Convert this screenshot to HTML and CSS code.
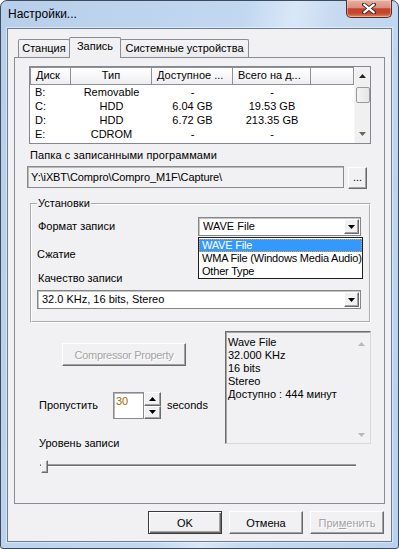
FILE: index.html
```html
<!DOCTYPE html>
<html lang="ru">
<head>
<meta charset="utf-8">
<title>Настройки</title>
<link rel="stylesheet" href="styles.css">
</head>
<body>
<div class="window">
  <div class="titlebar">
    <span class="title">Настройки...</span>
    <div class="close">
      <svg width="14" height="11" viewBox="0 0 14 11"><path d="M2 1.5 L12 9.5 M12 1.5 L2 9.5" stroke="#3a2a28" stroke-width="4" stroke-linecap="round"/><path d="M2.2 1.7 L11.8 9.3 M11.8 1.7 L2.2 9.3" stroke="#fff" stroke-width="2.2" stroke-linecap="round"/></svg>
    </div>
  </div>
  <div class="client">
    <div class="tabs">
      <div class="tab t1">Станция</div>
      <div class="tab t2 active">Запись</div>
      <div class="tab t3">Системные устройства</div>
    </div>
    <div class="panel">
      <div class="lv">
        <div class="lv-main">
          <div class="lv-head">
            <div class="hc left">Диск</div>
            <div class="hc">Тип</div>
            <div class="hc left">Доступное ...</div>
            <div class="hc left">Всего на д...</div>
            <div class="hc"></div>
          </div>
          <div class="lv-row"><span class="rc left">B:</span><span class="rc">Removable</span><span class="rc">-</span><span class="rc">-</span></div>
          <div class="lv-row"><span class="rc left">C:</span><span class="rc">HDD</span><span class="rc">6.04 GB</span><span class="rc">19.53 GB</span></div>
          <div class="lv-row"><span class="rc left">D:</span><span class="rc">HDD</span><span class="rc">6.72 GB</span><span class="rc">213.35 GB</span></div>
          <div class="lv-row"><span class="rc left">E:</span><span class="rc">CDROM</span><span class="rc">-</span><span class="rc">-</span></div>
        </div>
        <div class="sb">
          <div class="sb-arrow"><svg width="7" height="4" viewBox="0 0 7 4"><path d="M0 4 L3.5 0 L7 4 Z" fill="#222"/></svg></div>
          <div class="sb-thumb"></div>
          <div class="sb-space"></div>
          <div class="sb-arrow"><svg width="7" height="4" viewBox="0 0 7 4"><path d="M0 0 L3.5 4 L7 0 Z" fill="#666"/></svg></div>
        </div>
      </div>

      <div class="lbl path-label">Папка с записанными программами</div>
      <div class="path-row">
        <div class="edit path">Y:\iXBT\Compro\Compro_M1F\Capture\</div>
        <div class="btn dots">...</div>
      </div>

      <fieldset class="group">
        <legend>Установки</legend>
        <div class="fmt-row">
          <div class="lbl fmt-label">Формат записи</div>
          <div class="combo-wrap">
            <div class="combo fmt-combo">
              <div class="combo-text">WAVE File</div>
              <div class="combo-btn"><svg width="7" height="4" viewBox="0 0 7 4"><path d="M0 0 L3.5 4 L7 0 Z" fill="#000"/></svg></div>
            </div>
            <div class="dropdown">
              <div class="dd-item sel">WAVE File</div>
              <div class="dd-item">WMA File (Windows Media Audio)</div>
              <div class="dd-item">Other Type</div>
            </div>
          </div>
        </div>
        <div class="lbl comp-label">Сжатие</div>
        <div class="lbl q-label">Качество записи</div>
        <div class="combo q-combo">
          <div class="combo-text">32.0 KHz, 16 bits, Stereo</div>
          <div class="combo-btn"><svg width="7" height="4" viewBox="0 0 7 4"><path d="M0 0 L3.5 4 L7 0 Z" fill="#000"/></svg></div>
        </div>
      </fieldset>

      <div class="lower">
        <div class="lower-left">
          <div class="btn disabled comp-btn">Compressor Property</div>
          <div class="skip-row">
            <span class="lbl skip-label">Пропустить</span>
            <div class="spin">
              <div class="spin-edit">30</div>
              <div class="spin-btns">
                <div class="spin-b"><svg width="7" height="4" viewBox="0 0 7 4"><path d="M0 4 L3.5 0 L7 4 Z" fill="#000"/></svg></div>
                <div class="spin-b"><svg width="7" height="4" viewBox="0 0 7 4"><path d="M0 0 L3.5 4 L7 0 Z" fill="#000"/></svg></div>
              </div>
            </div>
            <span class="lbl sec">seconds</span>
          </div>
          <div class="lbl level-label">Уровень записи</div>
        </div>
        <div class="info">
          <div class="info-text">
            <div>Wave File</div>
            <div>32.000 KHz</div>
            <div>16 bits</div>
            <div>Stereo</div>
            <div>Доступно : 444 минут</div>
          </div>
          <div class="info-sb">
            <svg width="7" height="4" viewBox="0 0 7 4"><path d="M0 4 L3.5 0 L7 4 Z" fill="#b8b8b8"/></svg>
            <svg width="7" height="4" viewBox="0 0 7 4"><path d="M0 0 L3.5 4 L7 0 Z" fill="#b8b8b8"/></svg>
          </div>
        </div>
      </div>

      <div class="slider">
        <div class="track"></div>
        <div class="thumb"></div>
      </div>
    </div>

    <div class="buttons">
      <div class="btn dlg default">OK</div>
      <div class="btn dlg">Отмена</div>
      <div class="btn dlg disabled">При<u>м</u>енить</div>
    </div>
  </div>
</div>
</body>
</html>
```
FILE: styles.css
```css
* { box-sizing: border-box; }
html, body { margin: 0; padding: 0; }
body {
  width: 399px; height: 549px; overflow: hidden; background: #fff;
  font-family: "Liberation Sans", Arial, sans-serif; font-size: 11px; color: #000;
}
.window {
  width: 399px; height: 549px;
  border: 1px solid #3e4b5c;
  border-radius: 7px 7px 3px 3px;
  background: linear-gradient(100deg, #b7cfea 0%, #c2d8f1 50%, #d9e8f8 60%, #c6daf1 68%, #b9d1ec 100%);
  display: flex; flex-direction: column;
}
.titlebar {
  height: 27px; flex: none;
  display: flex; justify-content: space-between; align-items: flex-start;
}
.title {
  font-size: 12px; line-height: 16px; padding: 5px 0 0 7px; color: #000;
}
.close {
  width: 46px; height: 18px; margin: -1px 6px 0 0;
  border: 1px solid #5b2b22; border-top: none;
  border-radius: 0 0 5px 5px;
  background: linear-gradient(#e9b0a2 0%, #d8907f 45%, #c2412b 52%, #c84a30 80%, #e38860 100%);
  box-shadow: inset 0 0 0 1px rgba(255,255,255,0.35);
  display: flex; align-items: center; justify-content: center;
}
.client {
  flex: 1; margin: 0 6px 6px 6px;
  border: 1px solid #6f7c8c;
  background: #f1f0f2;
  padding: 8px 6px 0 6px;
  display: flex; flex-direction: column;
  box-shadow: 0 0 0 1px rgba(255,255,255,0.45);
}
.tabs {
  height: 20px; flex: none;
  display: flex; align-items: flex-end; padding-left: 4px;
}
.tab {
  height: 18px; line-height: 16px; text-align: center;
  border: 1px solid #898c95; border-bottom: none;
  border-radius: 2px 2px 0 0;
  background: linear-gradient(#f4f3f5, #ebeaec);
}
.t1 { width: 52px; }
.t2 { width: 52px; margin-left: -1px; }
.t3 { width: 129px; margin-left: -1px; }
.tab.active {
  height: 21px; line-height: 17px; margin-bottom: -1px;
  position: relative; z-index: 1; background: #f1f0f2;
}
.panel {
  height: 447px; flex: none;
  border: 1px solid #898c95;
  padding: 8px 13px 0 14px;
  background: #f1f0f2;
  display: flex; flex-direction: column;
}

/* list view */
.lv {
  width: 342px; height: 78px; flex: none;
  border: 1px solid #828790; background: #fff;
  display: flex; overflow: hidden;
}
.lv-main { width: 324px; }
.lv-head, .lv-row {
  display: grid; grid-template-columns: 41px 81px 81px 78px 43px;
}
.lv-head { height: 18px; }
.hc {
  border-right: 1px solid #8f9094; border-bottom: 1px solid #8f9094;
  border-top: 1px solid #8f9094;
  background: linear-gradient(#ffffff, #f6f5f8 60%, #eeedf0);
  line-height: 15px; text-align: center; white-space: nowrap; overflow: hidden;
}
.hc:first-child { border-left: 1px solid #8f9094; }
.hc.left { text-align: left; padding-left: 5px; }
.lv-row { height: 14px; line-height: 14px; }
.rc { text-align: center; white-space: nowrap; }
.rc.left { text-align: left; padding-left: 5px; }
.sb {
  width: 16px; background: #f0f0f0;
  display: flex; flex-direction: column; align-items: center;
  border-left: 1px solid #f7f7f7;
}
.sb-arrow { height: 18px; flex: none; display: flex; align-items: center; justify-content: center; }
.sb-thumb {
  width: 14px; height: 16px; margin-top: 2px; flex: none;
  border: 1px solid #9a9a9a; border-radius: 2px;
  background: linear-gradient(90deg, #f3f3f3, #e6e6e6);
}
.sb-space { flex: 1; }

.lbl { line-height: 13px; white-space: nowrap; }
.path-label { margin: 5px 0 0 1px; letter-spacing: 0.1px; }
.path-row { display: flex; margin: 4px 0 0 -2px; }
.edit {
  border: 1px solid #8a8a8a;
  box-shadow: inset 1px 1px 0 #b9b9b9;
}
.path {
  width: 317px; height: 22px; padding: 0 0 0 3px; line-height: 20px;
  background: #f1f0f2; white-space: nowrap; letter-spacing: -0.1px;
}
.btn {
  border: 1px solid; border-color: #fff #6b6b6b #6b6b6b #fff;
  box-shadow: inset -1px -1px 0 #a3a3a3;
  background: #f1f0f2;
  display: flex; align-items: center; justify-content: center;
  white-space: nowrap;
}
.btn.disabled { color: #a3a3a3; text-shadow: 1px 1px 0 #fff; }
.dots { width: 19px; height: 22px; margin: 1px 0 0 4px; padding-bottom: 3px; }

/* group */
.group {
  margin: 8px 0 0 1px; width: 341px;
  border: 2px groove #ffffff;
  padding: 7px 0 12px 5px;
  min-inline-size: 0;
}
.group legend { padding: 0 1px; line-height: 13px; }
.fmt-row { display: flex; align-items: center; height: 19px; }
.fmt-label { width: 161px; padding-left: 1px; }
.combo-wrap { position: relative; }
.combo {
  height: 19px; display: flex; background: #fff;
  border: 1px solid #858585;
  box-shadow: inset 1px 1px 0 #c4c4c4;
}
.fmt-combo { width: 163px; }
.q-combo { width: 324px; margin-top: 5px; }
.combo-text { flex: 1; padding-left: 4px; line-height: 17px; white-space: nowrap; }
.combo-btn {
  width: 15px; height: 15px; margin: 1px;
  border: 1px solid; border-color: #fff #6b6b6b #6b6b6b #fff;
  box-shadow: inset -1px -1px 0 #a3a3a3;
  background: #f1f0f2;
  display: flex; align-items: center; justify-content: center;
}
.dropdown {
  position: absolute; left: 0; top: 20px; z-index: 5;
  width: 165px; height: 42px;
  border: 1px solid #1f1f1f; background: #fff;
  padding-top: 1px;
}
.dd-item { height: 13px; line-height: 13px; padding-left: 3px; white-space: nowrap; letter-spacing: -0.2px; overflow: hidden; }
.dd-item.sel { background: #3399ff; color: #fff; outline: 1px dotted #e8a14a; outline-offset: -1px; }
.comp-label { margin-top: 12px; }
.q-label { margin-top: 11px; padding-left: 1px; }

/* lower */
.lower { display: flex; margin-left: 10px; }
.lower-left { width: 186px; display: flex; flex-direction: column; }
.comp-btn { width: 124px; height: 23px; margin: 20px 0 0 23px; letter-spacing: -0.3px; }
.skip-row { display: flex; align-items: center; margin-top: 26px; height: 27px; }
.skip-label { width: 74px; }
.spin { display: flex; width: 48px; height: 27px; }
.spin-edit {
  width: 31px; height: 27px; background: #fff; color: #a86400;
  border: 1px solid #8a8a8a; box-shadow: inset 1px 1px 0 #b9b9b9;
  padding: 2px 0 0 2px; line-height: 13px;
}
.spin-btns { width: 17px; display: flex; flex-direction: column; }
.spin-b {
  flex: 1;
  border: 1px solid; border-color: #fff #6b6b6b #6b6b6b #fff;
  box-shadow: inset -1px -1px 0 #a3a3a3;
  background: #f1f0f2;
  display: flex; align-items: center; justify-content: center;
}
.sec { margin-left: 6px; }
.level-label { margin-top: 18px; }
.info {
  width: 146px; height: 113px; margin-top: 8px;
  border: 1px solid #6d6d6d; border-right-color: #d8d8d8; border-bottom-color: #d8d8d8;
  box-shadow: inset 1px 1px 0 #a5a5a5;
  background: #f1f0f2;
  display: flex;
}
.info-text { flex: 1; padding: 4px 0 0 2px; line-height: 13px; }
.info-sb {
  width: 17px; display: flex; flex-direction: column; align-items: center;
  justify-content: space-between; padding: 10px 0 6px;
}
.slider { position: relative; width: 316px; height: 13px; margin: 10px 0 0 11px; }
.track {
  margin-top: 4px; height: 3px;
  border-top: 1px solid #a0a0a0; border-bottom: 1px solid #fff;
  background: #e3e3e3;
  box-shadow: inset 0 1px 0 #696969;
}
.thumb {
  position: absolute; left: 1px; top: 0; width: 7px; height: 13px;
  border: 1px solid; border-color: #fff #6b6b6b #6b6b6b #fff;
  box-shadow: inset -1px -1px 0 #a3a3a3;
  background: #f1f0f2;
}

/* dialog buttons */
.buttons { display: flex; justify-content: flex-end; gap: 7px; margin: 7px 1px 0 0; }
.dlg { width: 74px; height: 23px; }
.dlg.default {
  border: 1px solid #3a3a3a;
  box-shadow: inset 1px 1px 0 #fff, inset -1px -1px 0 #6b6b6b, inset -2px -2px 0 #a3a3a3;
}
.dlg u { text-decoration: underline; }
```
